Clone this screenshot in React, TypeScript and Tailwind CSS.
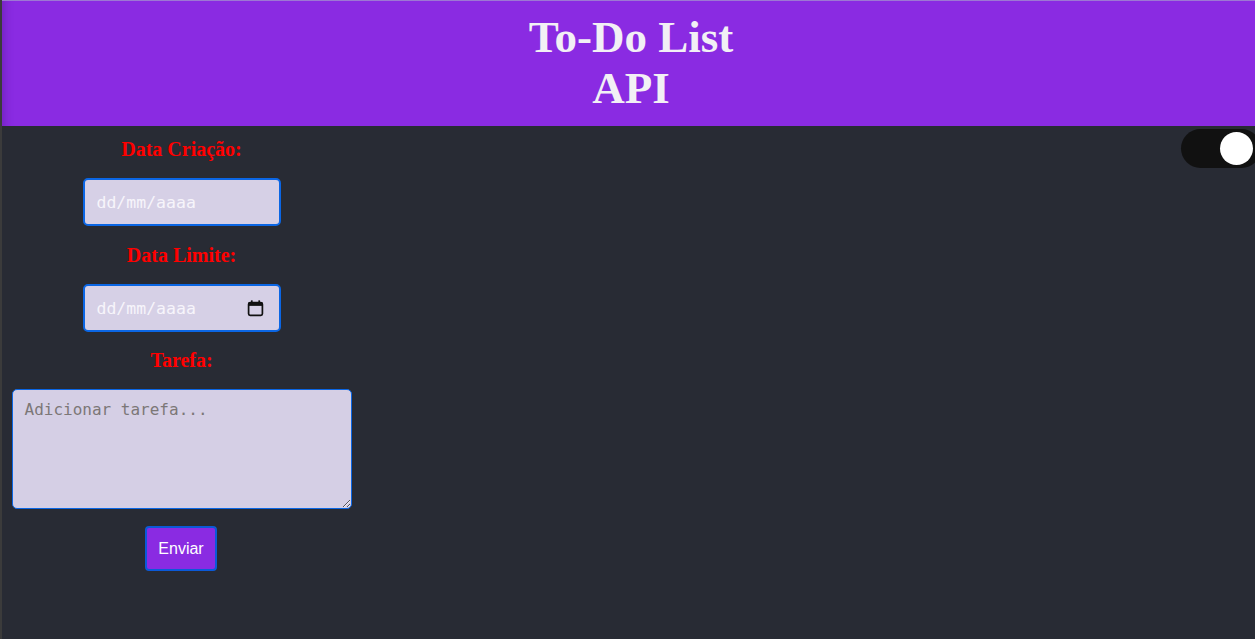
function CampoData({ icone }: { icone?: boolean }) {
  return (
    <div className="relative w-[198px] h-[48px] rounded-[5px] border-2 border-[#0b66e4] bg-[#d6d0e6] flex items-center">
      <input
        type="text"
        placeholder="dd/mm/aaaa"
        className="w-full h-full bg-transparent pl-[12px] pr-3 outline-none text-[16.5px] text-white placeholder:text-[#f7f5fb] font-['DejaVu_Sans_Mono',monospace]"
      />
      {icone && (
        <svg
          viewBox="0 0 16 16"
          className="absolute right-[15px] top-[13px] w-[17px] h-[18px]"
          fill="none"
          stroke="#111"
        >
          <rect x="1.5" y="3" width="13" height="12" rx="1.5" strokeWidth="1.6" />
          <rect x="1.5" y="3" width="13" height="3" fill="#111" strokeWidth="0" />
          <line x1="4.5" y1="0.8" x2="4.5" y2="3.5" strokeWidth="1.6" />
          <line x1="11.5" y1="0.8" x2="11.5" y2="3.5" strokeWidth="1.6" />
        </svg>
      )}
    </div>
  );
}

function Rotulo({ children }: { children: React.ReactNode }) {
  return (
    <label className="block h-[23px] leading-[23px] text-[20px] font-bold text-[#ff0000] font-['Liberation_Serif',serif]">
      {children}
    </label>
  );
}

export default function App() {
  return (
    <div className="min-h-[639px] bg-[#282b34] border-l-2 border-[#3b3b3b] overflow-hidden">
      <header className="h-[126px] bg-[#8a2be2] border-t border-[#9d78d3] flex flex-col items-center pt-[11px] pl-[5px] shadow-[inset_12px_0_10px_-10px_rgba(60,20,120,0.35)]">
        <h1 className="text-[45px] leading-[51px] font-bold text-[#f2f0f5] text-center font-['Liberation_Serif',serif]">
          To-Do List
        </h1>
        <h1 className="text-[45px] leading-[51px] font-bold text-[#f2f0f5] text-center font-['Liberation_Serif',serif]">
          API
        </h1>
      </header>

      <div className="flex">
        <form className="w-[359px] flex flex-col items-center pt-[12px]">
          <Rotulo>Data Criação:</Rotulo>
          <div className="mt-[17px]">
            <CampoData />
          </div>
          <div className="mt-[18px]">
            <Rotulo>Data Limite:</Rotulo>
          </div>
          <div className="mt-[17px]">
            <CampoData icone />
          </div>
          <div className="mt-[17px]">
            <Rotulo>Tarefa:</Rotulo>
          </div>
          <textarea
            placeholder="Adicionar tarefa..."
            className="mt-[17px] w-[340px] h-[120px] rounded-[5px] border border-[#0b66e4] bg-[#d5cfe5] pl-[12px] pr-[11px] py-[10px] text-[16px] leading-[20px] outline-none placeholder:text-[#7c7777] font-['DejaVu_Sans_Mono',monospace]"
          />
          <button
            type="button"
            className="mt-[17px] -ml-[1px] w-[72px] h-[45px] rounded-[4px] border-2 border-[#0b5ad8] bg-[#8a2be2] text-white text-[16px] font-['Liberation_Sans',Arial,sans-serif]"
          >
            Enviar
          </button>
        </form>

        <div className="flex-1" />

        <div className="mt-[3px] -mr-[6px] w-[80px] h-[39px] rounded-full bg-[#111111] flex items-center justify-end pr-[8px]">
          <div className="w-[33px] h-[33px] rounded-full bg-white" />
        </div>
      </div>
    </div>
  );
}
